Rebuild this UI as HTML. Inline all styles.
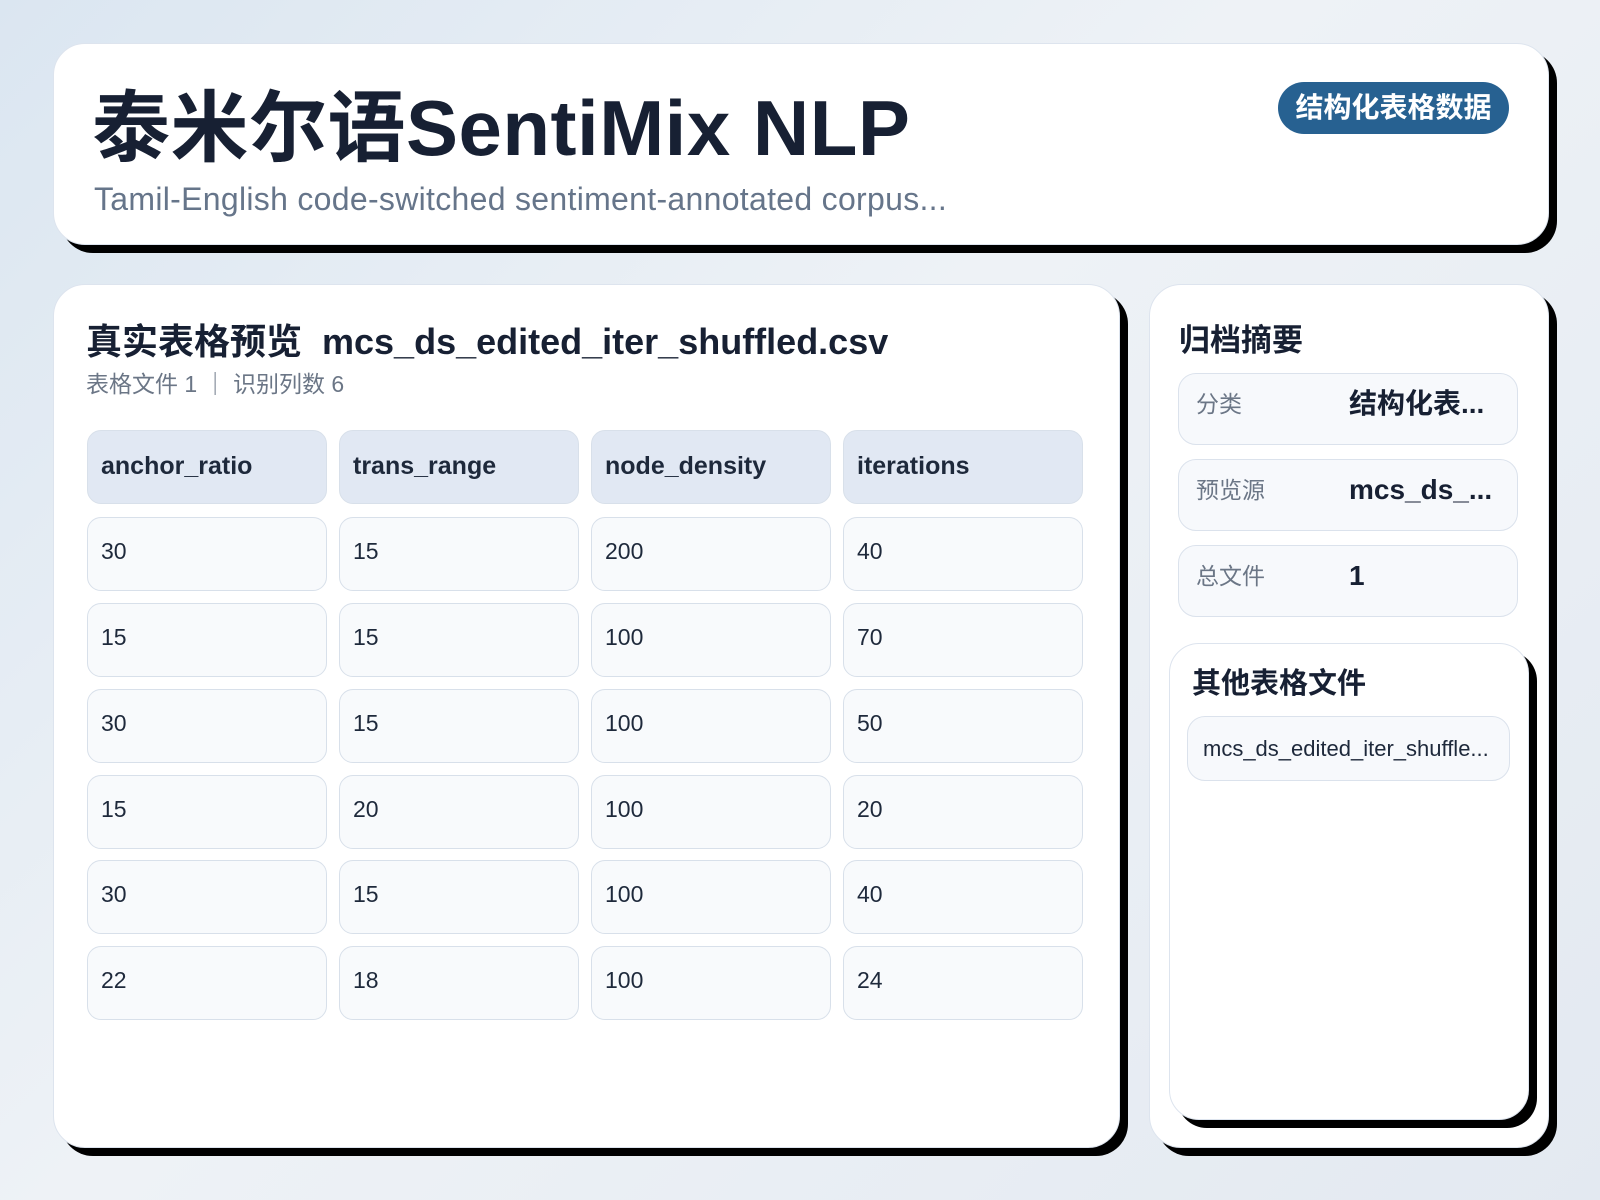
<!DOCTYPE html>
<html><head><meta charset="utf-8">
<style>
*{margin:0;padding:0;box-sizing:border-box}
body{width:1600px;height:1200px;overflow:hidden;position:relative;background:linear-gradient(135deg,#dbe6f1 0%,#eef2f6 45%,#e3e9f1 100%);font-family:"Liberation Sans","Noto Sans CJK SC",sans-serif;color:#172033}
.card{position:absolute;background:#fff;border:1px solid #dde4ee;border-radius:32px;box-shadow:8px 8px 0 #000}
.abs{position:absolute;white-space:nowrap}
.cell{position:absolute;width:240px;height:74px;border:1px solid #d8e0ea;border-radius:14px;background:#f8fafc;font-size:23px;padding:0 0 0 13px;line-height:66px;color:#1e293b}
.hd{background:#e1e8f3;font-weight:bold;font-size:25px;line-height:70px}
.item{position:absolute;left:1178px;width:340px;height:72px;border:1px solid #dbe2ec;border-radius:18px;background:#f7f9fc}
.lab{position:absolute;left:17px;top:-5px;line-height:70px;font-size:23px;color:#6b7686}
.val{position:absolute;left:170px;top:-5px;line-height:70px;font-size:28px;font-weight:bold;color:#172033}
</style></head><body>
<div class="card" style="left:53px;top:43px;width:1496px;height:202px"></div>
<div class="abs" style="left:92px;top:80px;font-size:78px;font-weight:bold;line-height:96px;color:#172033;letter-spacing:0.5px">泰米尔语SentiMix NLP</div>
<div class="abs" style="left:94px;top:178px;font-size:32px;line-height:42px;color:#66758a;letter-spacing:0.3px">Tamil-English code-switched sentiment-annotated corpus...</div>
<div class="abs" style="left:1278px;top:82px;width:231px;height:52px;border-radius:26px;background:#276191;color:#fff;font-size:28px;font-weight:bold;text-align:center;line-height:52px">结构化表格数据</div>

<div class="card" style="left:53px;top:284px;width:1067px;height:864px"></div>
<div class="abs" style="left:86px;top:318px;font-size:36px;font-weight:bold;line-height:48px">真实表格预览&nbsp;&nbsp;mcs_ds_edited_iter_shuffled.csv</div>
<div class="abs" style="left:86px;top:368px;font-size:23px;line-height:32px;color:#6b7686">表格文件 1 ｜ 识别列数 6</div>

<div class="cell hd" style="left:87px;top:430px">anchor_ratio</div>
<div class="cell hd" style="left:339px;top:430px">trans_range</div>
<div class="cell hd" style="left:591px;top:430px">node_density</div>
<div class="cell hd" style="left:843px;top:430px">iterations</div>

<div class="cell" style="left:87px;top:517px">30</div><div class="cell" style="left:339px;top:517px">15</div><div class="cell" style="left:591px;top:517px">200</div><div class="cell" style="left:843px;top:517px">40</div>
<div class="cell" style="left:87px;top:603px">15</div><div class="cell" style="left:339px;top:603px">15</div><div class="cell" style="left:591px;top:603px">100</div><div class="cell" style="left:843px;top:603px">70</div>
<div class="cell" style="left:87px;top:689px">30</div><div class="cell" style="left:339px;top:689px">15</div><div class="cell" style="left:591px;top:689px">100</div><div class="cell" style="left:843px;top:689px">50</div>
<div class="cell" style="left:87px;top:775px">15</div><div class="cell" style="left:339px;top:775px">20</div><div class="cell" style="left:591px;top:775px">100</div><div class="cell" style="left:843px;top:775px">20</div>
<div class="cell" style="left:87px;top:860px">30</div><div class="cell" style="left:339px;top:860px">15</div><div class="cell" style="left:591px;top:860px">100</div><div class="cell" style="left:843px;top:860px">40</div>
<div class="cell" style="left:87px;top:946px">22</div><div class="cell" style="left:339px;top:946px">18</div><div class="cell" style="left:591px;top:946px">100</div><div class="cell" style="left:843px;top:946px">24</div>

<div class="card" style="left:1149px;top:284px;width:400px;height:864px"></div>
<div class="abs" style="left:1179px;top:320px;font-size:31px;font-weight:bold;line-height:42px">归档摘要</div>
<div class="item" style="top:373px"><div class="lab">分类</div><div class="val">结构化表...</div></div>
<div class="item" style="top:459px"><div class="lab">预览源</div><div class="val">mcs_ds_...</div></div>
<div class="item" style="top:545px"><div class="lab">总文件</div><div class="val">1</div></div>

<div class="card" style="left:1169px;top:643px;width:360px;height:477px;border-radius:30px"></div>
<div class="abs" style="left:1192px;top:664px;font-size:29px;font-weight:bold;line-height:40px">其他表格文件</div>
<div class="abs" style="left:1187px;top:716px;width:323px;height:65px;border:1px solid #dbe2ec;border-radius:18px;background:#f7f9fc;font-size:22px;line-height:63px;padding-left:15px;color:#1e293b">mcs_ds_edited_iter_shuffle...</div>
</body></html>
